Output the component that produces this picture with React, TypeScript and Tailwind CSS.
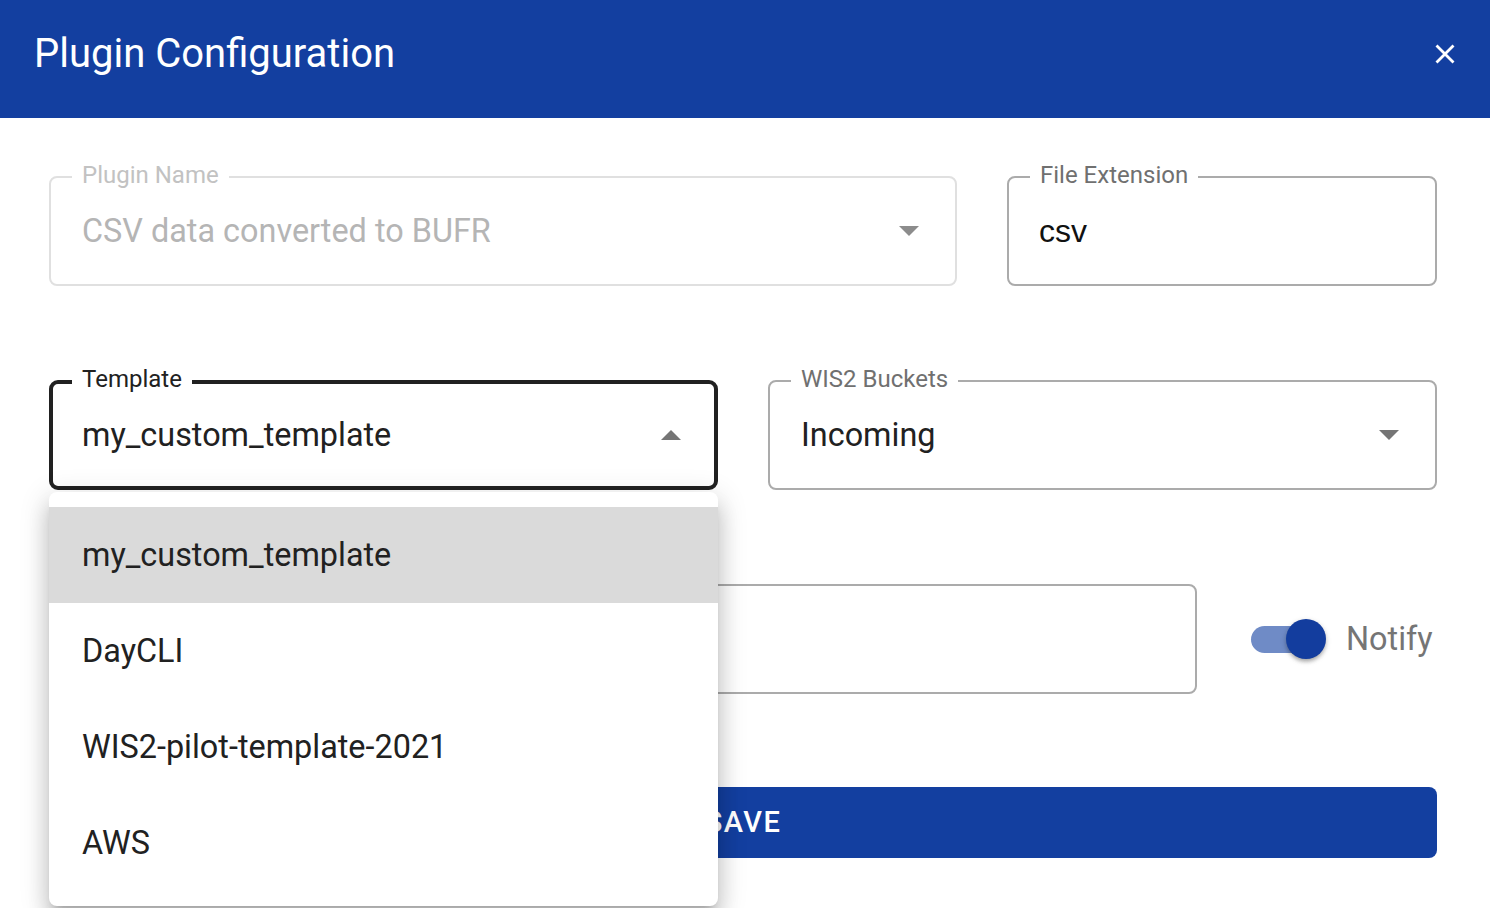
import React from 'react';

type FieldState = 'normal' | 'disabled' | 'focused';

interface OutlinedFieldProps {
  label?: string;
  value?: string;
  state?: FieldState;
  arrow?: 'down' | 'up';
  valueClass?: string;
  className?: string;
  children?: React.ReactNode;
}

const Arrow: React.FC<{ dir: 'down' | 'up'; color: string; focused: boolean }> = ({ dir, color, focused }) => (
  <svg
    width="20"
    height="10"
    viewBox="0 0 20 10"
    className={`absolute top-1/2 -translate-y-1/2 ${focused ? 'right-[33px]' : 'right-[36px]'}`}
  >
    {dir === 'down' ? (
      <polygon points="0,0 20,0 10,10" fill={color} />
    ) : (
      <polygon points="0,10 20,10 10,0" fill={color} />
    )}
  </svg>
);

const OutlinedField: React.FC<OutlinedFieldProps> = ({
  label,
  value,
  state = 'normal',
  arrow,
  valueClass,
  className = '',
  children,
}) => {
  const box =
    state === 'focused'
      ? 'border-[4px] border-[#212121] rounded-[9px] pl-[29px]'
      : state === 'disabled'
      ? 'border-2 border-[#e0e0e0] rounded-[8px] pl-[31px]'
      : 'border-2 border-[#ababab] rounded-[8px] pl-[31px]';
  const labelColor =
    state === 'focused'
      ? 'text-[#212121] left-[19px] top-[-20px]'
      : state === 'disabled'
      ? 'text-[#c2c2c2] left-[21px] top-[-18px]'
      : 'text-[#707070] left-[21px] top-[-18px]';
  const arrowColor = state === 'disabled' ? '#8c8c8c' : '#757575';

  return (
    <div className={`relative h-[110px] flex items-center bg-white ${box} ${className}`}>
      {label && (
        <span className={`absolute px-[10px] bg-white text-[24px] leading-[30px] ${labelColor}`}>
          {label}
        </span>
      )}
      {value && (
        <span className={valueClass ?? `text-[32.4px] ${state === 'disabled' ? 'text-[#b5b5b5]' : 'text-[#212121]'}`}>
          {value}
        </span>
      )}
      {arrow && <Arrow dir={arrow} color={arrowColor} focused={state === 'focused'} />}
      {children}
    </div>
  );
};

const TEMPLATES = ['my_custom_template', 'DayCLI', 'WIS2-pilot-template-2021', 'AWS'];

export default function App() {
  const selected = TEMPLATES[0];

  return (
    <div className="min-h-screen bg-white font-['Roboto',sans-serif] overflow-hidden">
      {/* Dialog title bar */}
      <div className="h-[118px] bg-[#133fa0] flex items-center justify-between pl-[34px] pr-[35px]">
        <h2 className="text-white text-[40px] leading-none pb-[10px]">Plugin Configuration</h2>
        <button className="w-[20px] h-[20px] mb-[10px] text-white">
          <svg viewBox="0 0 20 20" width="20" height="20">
            <path d="M1.5 1.5L18.5 18.5M18.5 1.5L1.5 18.5" stroke="currentColor" strokeWidth="2.8" />
          </svg>
        </button>
      </div>

      <div className="pl-[49px] pr-[53px] pt-[58px] flex flex-col">
        <div className="flex gap-[50px]">
          <OutlinedField
            className="w-[908px]"
            label="Plugin Name"
            value="CSV data converted to BUFR"
            state="disabled"
            arrow="down"
          />
          <OutlinedField
            className="flex-1"
            label="File Extension"
            value="csv"
            valueClass="text-[32px] text-[#111] -ml-[1px] font-['Liberation_Sans',Arial,sans-serif]"
          />
        </div>

        <div className="flex gap-[50px] mt-[94px]">
          <div className="relative w-[669px] z-10">
            <OutlinedField label="Template" value={selected} state="focused" arrow="up" />
            {/* open select menu */}
            <ul className="absolute left-0 right-0 top-full mt-[2px] bg-white rounded-[8px] py-[15px] shadow-[0_10px_10px_-6px_rgba(0,0,0,0.2),0_16px_20px_2px_rgba(0,0,0,0.14),0_6px_28px_4px_rgba(0,0,0,0.12)]">
              {TEMPLATES.map((t) => (
                <li
                  key={t}
                  className={`h-[96px] flex items-center pl-[33px] text-[32.4px] text-[#212121] ${t === selected ? 'bg-[#dadada]' : ''}`}
                >
                  {t}
                </li>
              ))}
            </ul>
          </div>
          <OutlinedField className="flex-1" label="WIS2 Buckets" value="Incoming" arrow="down" />
        </div>

        <div className="flex mt-[94px] gap-[50px]">
          <OutlinedField className="w-[1148px]" />
          <div className="flex-1 flex items-center pl-[4px]">
            <div className="relative w-[75px] h-[40px] flex items-center">
              <div className="w-[68px] h-[27px] rounded-full bg-[#6f8bc6]" />
              <div className="absolute right-0 top-0 w-[40px] h-[40px] rounded-full bg-[#133d9e] shadow-[0_4px_4px_-2px_rgba(0,0,0,0.2),0_2px_4px_0_rgba(0,0,0,0.14),0_2px_6px_0_rgba(0,0,0,0.12)]" />
            </div>
            <span className="ml-[20px] text-[32.4px] text-[#757575]">Notify</span>
          </div>
        </div>

        <button className="mt-[93px] h-[71px] w-full rounded-[8px] bg-[#133fa0] text-white text-[29px] font-medium tracking-[1.5px]">
          SAVE
        </button>
      </div>
    </div>
  );
}
